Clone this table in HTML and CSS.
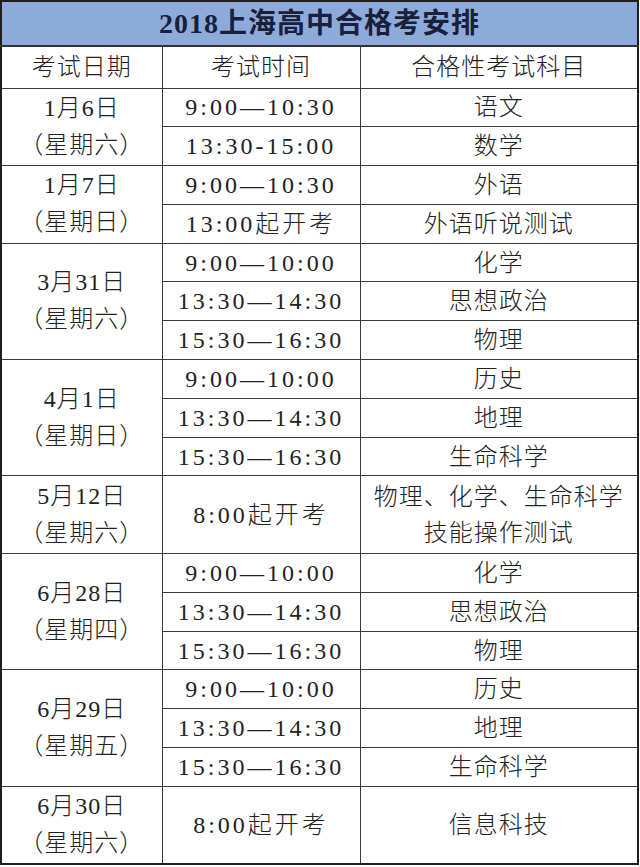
FILE: index.html
```html
<!DOCTYPE html>
<html lang="zh-CN">
<head>
<meta charset="utf-8">
<title>2018上海高中合格考安排</title>
<link rel="stylesheet" href="styles.css">
</head>
<body>
<table class="schedule">
  <colgroup>
    <col class="c-date">
    <col class="c-time">
    <col class="c-subj">
  </colgroup>
  <tr class="title-row"><th colspan="3">2018上海高中合格考安排</th></tr>
  <tr class="head-row"><th>考试日期</th><th>考试时间</th><th>合格性考试科目</th></tr>

  <tr><td rowspan="2" class="date">1月6日<br>（星期六）</td><td class="time">9:00—10:30</td><td>语文</td></tr>
  <tr><td class="time">13:30-15:00</td><td>数学</td></tr>

  <tr><td rowspan="2" class="date">1月7日<br>（星期日）</td><td class="time">9:00—10:30</td><td>外语</td></tr>
  <tr><td class="time">13:00起开考</td><td>外语听说测试</td></tr>

  <tr><td rowspan="3" class="date">3月31日<br>（星期六）</td><td class="time">9:00—10:00</td><td>化学</td></tr>
  <tr><td class="time">13:30—14:30</td><td>思想政治</td></tr>
  <tr><td class="time">15:30—16:30</td><td>物理</td></tr>

  <tr><td rowspan="3" class="date">4月1日<br>（星期日）</td><td class="time">9:00—10:00</td><td>历史</td></tr>
  <tr><td class="time">13:30—14:30</td><td>地理</td></tr>
  <tr><td class="time">15:30—16:30</td><td>生命科学</td></tr>

  <tr class="tall"><td class="date">5月12日<br>（星期六）</td><td class="time">8:00起开考</td><td class="multi">物理、化学、生命科学<br>技能操作测试</td></tr>

  <tr><td rowspan="3" class="date">6月28日<br>（星期四）</td><td class="time">9:00—10:00</td><td>化学</td></tr>
  <tr><td class="time">13:30—14:30</td><td>思想政治</td></tr>
  <tr><td class="time">15:30—16:30</td><td>物理</td></tr>

  <tr><td rowspan="3" class="date">6月29日<br>（星期五）</td><td class="time">9:00—10:00</td><td>历史</td></tr>
  <tr><td class="time">13:30—14:30</td><td>地理</td></tr>
  <tr><td class="time">15:30—16:30</td><td>生命科学</td></tr>

  <tr class="tall"><td class="date">6月30日<br>（星期六）</td><td class="time">8:00起开考</td><td>信息科技</td></tr>
</table>
</body>
</html>
```

FILE: styles.css
```css
html, body {
  margin: 0;
  padding: 0;
  background: #ffffff;
}

.schedule {
  width: 637px;
  table-layout: fixed;
  border-collapse: collapse;
  border: 2px solid #1e1e1e;
  font-family: "Liberation Serif", "Noto Sans CJK SC", serif;
  color: #222222;
  font-size: 24px;
}

.c-date { width: 161px; }
.c-time { width: 198px; }
.c-subj { width: 278px; }

.schedule th,
.schedule td {
  border: 1px solid #3a3a3a;
  padding: 0;
  text-align: center;
  vertical-align: middle;
  font-weight: 300;
  letter-spacing: 1px;
  line-height: 30px;
}

.schedule tr { height: 38.8px; }

.schedule tr.title-row { height: 45px; }
.schedule tr.title-row th {
  background: #8eaadb;
  color: #18203a;
  font-weight: 700;
  font-size: 28px;
  letter-spacing: 1px;
  border-bottom: 2px solid #333;
}

.schedule tr.head-row { height: 42px; }

.schedule td.date {
  line-height: 37px;
}

.schedule td.time {
  letter-spacing: 3px;
}

.schedule tr.tall { height: 77.6px; }

.schedule td.multi {
  line-height: 36px;
}
```
